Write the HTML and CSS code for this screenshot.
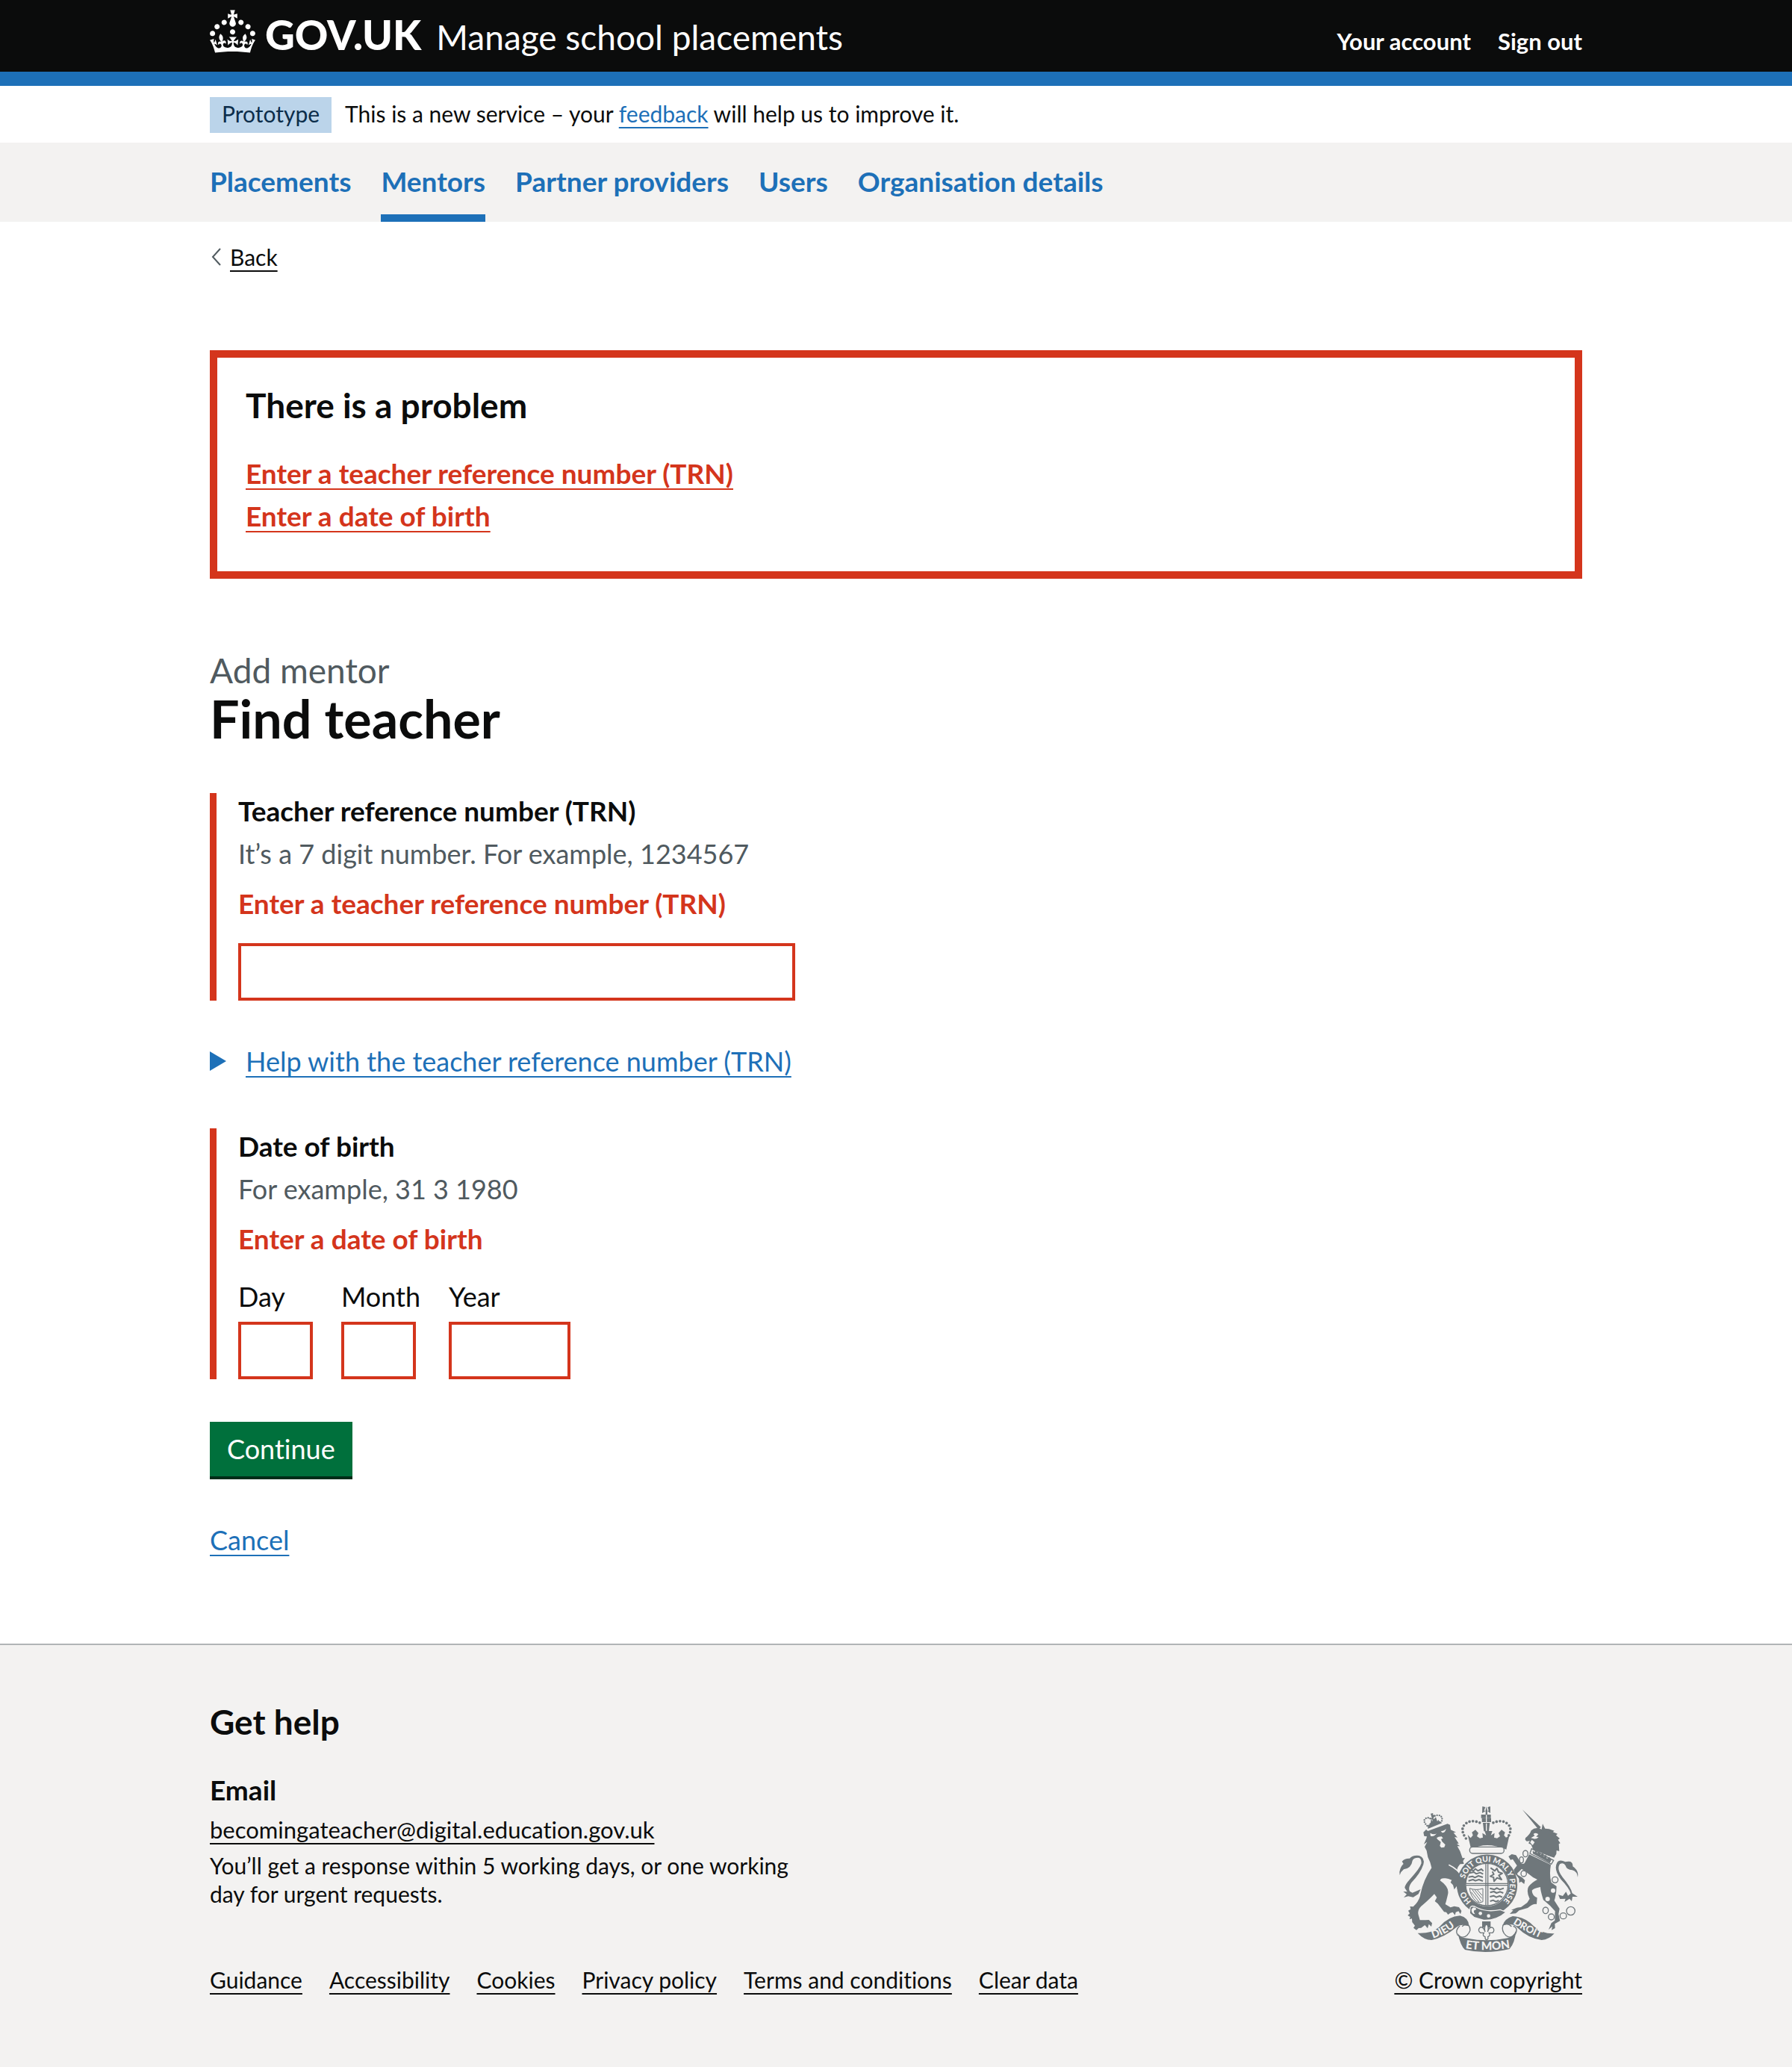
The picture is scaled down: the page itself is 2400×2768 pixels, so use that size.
FILE: index.html
```html
<!DOCTYPE html>
<html lang="en">
<head>
<meta charset="utf-8">
<meta name="viewport" content="width=device-width, initial-scale=1">
<title>Find teacher - Manage school placements - GOV.UK</title>
<link rel="stylesheet" href="styles.css">
</head>
<body>
<header class="header">
  <div class="container header-row">
    <a class="logo" href="#">
      <svg class="crown" viewBox="0 0 32 30" aria-hidden="true"><path fill="currentColor" d="M22.6 10.4c-1 .4-2-.1-2.4-1-.4-.9.1-2 1-2.4.9-.4 2 .1 2.4 1s-.1 2-1 2.4m-5.9 6.7c-.9.4-2-.1-2.4-1-.4-.9.1-2 1-2.4.9-.4 2 .1 2.4 1s-.1 2-1 2.4m10.8-3.7c-1 .4-2-.1-2.4-1-.4-.9.1-2 1-2.4.9-.4 2 .1 2.4 1s0 2-1 2.4m3.3 4.8c-1 .4-2-.1-2.4-1-.4-.9.1-2 1-2.4.9-.4 2 .1 2.4 1s-.1 2-1 2.4M17 4.7l2.3 1.2V2.5l-2.3.7-.2-.2.9-3h-3.4l.9 3-.2.2c-.1.1-2.3-.7-2.3-.7v3.4L15 4.7c.1.1.1.2.2.2l-1.3 4c-.1.2-.1.4-.1.6 0 1.1.8 2 1.9 2.2h.7c1-.2 1.9-1.1 1.9-2.1 0-.2 0-.4-.1-.6l-1.3-4c-.1-.2 0-.2.1-.3m-7.6 5.7c.9.4 2-.1 2.4-1 .4-.9-.1-2-1-2.4-.9-.4-2 .1-2.4 1s0 2 1 2.4m-5 3c.9.4 2-.1 2.4-1 .4-.9-.1-2-1-2.4-.9-.4-2 .1-2.4 1s.1 2 1 2.4m-3.2 4.8c.9.4 2-.1 2.4-1 .4-.9-.1-2-1-2.4-.9-.4-2 .1-2.4 1s0 2 1 2.4m14.8 11c4.4 0 8.6.3 12.3.8 1.1-4.5 2.4-7 3.7-8.8l-2.5-.9c.2 1.3.3 1.9 0 2.7-.4-.4-.8-1.1-1.1-2.3l-1.2 4c.7-.5 1.3-.8 2-.9-1.1 2.5-2.6 3.1-3.5 3-1.1-.2-1.7-1.2-1.5-2.1.3-1.2 1.5-1.5 2.1-.1 1.1-2.3-.8-3-2-2.3 1.9-1.9 2.1-3.5.6-5.6-2.1 1.6-2.1 3.2-1.2 5.5-1.2-1.4-3.2-.6-2.5 1.6.9-1.4 2.1-.5 1.9.8-.2 1.1-1.7 2.1-3.5 1.9-2.7-.2-2.9-2.1-2.9-3.6.7-.1 1.9.5 2.9 1.9l.4-4.3c-1.1 1.1-2.1 1.4-3.2 1.4.4-1.2 2.1-3 2.1-3h-5.4s1.7 1.9 2.1 3c-1.1 0-2.1-.2-3.2-1.4l.4 4.3c1-1.4 2.2-2 2.9-1.9-.1 1.5-.2 3.4-2.9 3.6-1.9.2-3.4-.8-3.5-1.9-.2-1.3 1-2.2 1.9-.8.7-2.3-1.2-3-2.5-1.6.9-2.2.9-3.9-1.2-5.5-1.5 2-1.3 3.7.6 5.6-1.2-.7-3.1 0-2 2.3.6-1.4 1.8-1.1 2.1.1.2.9-.3 1.9-1.5 2.1-.9.2-2.4-.5-3.5-3 .6 0 1.2.3 2 .9l-1.2-4c-.3 1.1-.7 1.9-1.1 2.3-.3-.8-.2-1.4 0-2.7l-2.9.9C1.3 23 2.6 25.5 3.7 30c3.7-.5 7.9-.8 12.3-.8"/></svg>
      <span class="logo-text">GOV.UK</span>
    </a>
    <a class="service-name" href="#">Manage school placements</a>
    <nav class="account" aria-label="Account">
      <a href="#">Your account</a>
      <a href="#">Sign out</a>
    </nav>
  </div>
</header>

<div class="container phase">
  <strong class="tag">Prototype</strong>
  <span>This is a new service – your <a class="link" href="#">feedback</a> will help us to improve it.</span>
</div>

<nav class="primary" aria-label="Primary">
  <ul class="container primary-list">
    <li><a href="#">Placements</a></li>
    <li><a href="#" aria-current="page">Mentors</a></li>
    <li><a href="#">Partner providers</a></li>
    <li><a href="#">Users</a></li>
    <li><a href="#">Organisation details</a></li>
  </ul>
</nav>

<div class="container content">
  <a class="back" href="#">
    <svg class="back-icon" viewBox="0 0 14 24" aria-hidden="true"><path d="M12 1L2 12l10 11" fill="none" stroke="#505a5f" stroke-width="2"/></svg>
    <span class="back-text">Back</span>
  </a>
  <main>
    <section class="error-summary" role="alert" aria-labelledby="problem">
      <h2 id="problem">There is a problem</h2>
      <ul>
        <li><a href="#trn">Enter a teacher reference number (TRN)</a></li>
        <li><a href="#day">Enter a date of birth</a></li>
      </ul>
    </section>

    <h1 class="title"><span class="caption">Add mentor</span>Find teacher</h1>

    <form action="#">
      <div class="group">
        <label class="group-label" for="trn">Teacher reference number (TRN)</label>
        <p class="hint" id="trn-hint">It’s a 7 digit number. For example, 1234567</p>
        <p class="error" id="trn-error">Enter a teacher reference number (TRN)</p>
        <input class="input input-wide" id="trn" type="text" aria-describedby="trn-hint trn-error">
      </div>

      <details class="details">
        <summary>
          <svg class="marker" viewBox="0 0 22 26" aria-hidden="true"><path fill="currentColor" d="M0 0l22 13L0 26z"/></svg>
          <span>Help with the teacher reference number (TRN)</span>
        </summary>
        <p>You can find the TRN on a payslip or teachers’ pension documentation.</p>
      </details>

      <div class="group">
        <fieldset aria-describedby="dob-hint dob-error">
          <legend class="group-label">Date of birth</legend>
          <p class="hint" id="dob-hint">For example, 31 3 1980</p>
          <p class="error" id="dob-error">Enter a date of birth</p>
          <div class="dates">
            <div class="date"><label for="day">Day</label><input class="input input-2" id="day" type="text" inputmode="numeric"></div>
            <div class="date"><label for="month">Month</label><input class="input input-2" id="month" type="text" inputmode="numeric"></div>
            <div class="date"><label for="year">Year</label><input class="input input-4" id="year" type="text" inputmode="numeric"></div>
          </div>
        </fieldset>
      </div>

      <button class="button" type="submit">Continue</button>
    </form>
    <p class="cancel"><a class="link" href="#">Cancel</a></p>
  </main>
</div>

<footer class="footer">
  <div class="container footer-row">
    <div>
      <h2 class="help-title">Get help</h2>
      <h3 class="email-title">Email</h3>
      <p class="email"><a class="plain" href="mailto:becomingateacher@digital.education.gov.uk">becomingateacher@digital.education.gov.uk</a></p>
      <p class="response">You’ll get a response within 5 working days, or one working day for urgent requests.</p>
      <ul class="footer-links">
        <li><a class="plain" href="#">Guidance</a></li>
        <li><a class="plain" href="#">Accessibility</a></li>
        <li><a class="plain" href="#">Cookies</a></li>
        <li><a class="plain" href="#">Privacy policy</a></li>
        <li><a class="plain" href="#">Terms and conditions</a></li>
        <li><a class="plain" href="#">Clear data</a></li>
      </ul>
    </div>
    <a class="copyright" href="#">
      <svg class="arms" viewBox="87 50 750 600" aria-hidden="true">
        <defs>
          <path id="garter" d="M392 441A92 92 0 1 1 514 444"/>
          <path id="ribbon-left" d="M238 589Q290 574 338 532"/>
          <path id="ribbon-mid" d="M368 629Q450 643 546 628"/>
          <path id="ribbon-right" d="M558 530Q608 562 676 592"/>
        </defs>
        <g fill="#6f777b">
          <!-- lion -->
          <path d="M199 163L210 152 217 158 296 129 306 133 309 153 330 163 320 165 336 184 324 182 341 208 333 209 346 219 335 219 346 238 356 267 366 266 358 279 362 290 347 291Q333 305 335 318L350 342 348 358 364 371 369 395 359 400 359 384 351 397 343 388 335 391 333 379 323 393 318 375 308 364 313 355 300 350 288 348Q268 345 266 357Q302 382 298 409Q292 437 287 452L308 465 323 460 342 464 352 479 348 492 340 480 329 484 326 496 317 484 307 487 298 494 291 484 282 483 257 450 245 440 253 425 243 411Q217 438 190 460Q174 476 179 495L185 516 208 516 221 515 234 528 231 542 221 532 216 549 205 536 190 547 180 548 171 556 159 547 165 538 154 524 153 510 143 512 146 503 136 497 144 489 138 478 148 472 145 461 158 462Q184 438 187 412Q200 352 232 306Q229 286 217 263L212 237 204 222 214 202 201 211 211 188 213 180 202 178Z"/>
          <path d="M103 322Q107 300 119 290L113 280Q124 267 144 268Q155 254 182 257Q206 266 199 292Q188 326 151 365Q136 386 144 400L155 406 188 392 179 411 158 424 138 420 120 425 132 412 118 401 134 402 124 386Q124 374 147 349Q185 308 191 287Q191 266 178 265Q159 265 155 277Q151 307 120 312Q108 321 104 335Z"/>
          <path d="M217 134L265 118 274 126 217 149Z"/>
          <path fill="none" stroke="#6f777b" stroke-width="7" stroke-linecap="round" stroke-dasharray="0 9" d="M214 137Q195 118 207 108Q222 100 230 112Q242 92 263 95Q280 101 271 124"/>
          <path d="M228 88l10-2-1 8 6-2 1 8-7 1 4 10 8-9 6 18 4-8 5 10-38 15-3-9 5-3 2-14 7 9z"/>
          <path fill="#f3f2f1" d="M226 166Q242 174 252 168Q242 182 228 178ZM269 157Q281 160 290 149Q287 166 274 165ZM252 186L260 181 272 180 278 187 270 190 274 200 287 213 283 223 271 225 265 218 269 202 256 192Z"/>
          <path fill="none" stroke="#f3f2f1" stroke-width="5" d="M301 294Q337 311 363 348"/>
          <!-- unicorn -->
          <path d="M596 71L671 142 662 153Z"/>
          <path d="M609 186Q628 171 632 156Q651 139 674 151L678 129 688 148 704 150 725 157 719 162 738 169 732 175 747 188 740 193 749 207 743 210 745 239 734 236 733 250 724 265 700 257 640 232 629 205 638 215 646 203 635 193 628 203 634 214 621 207 627 198 614 199 608 193Z"/>
          <path fill="#f3f2f1" d="M641 170Q651 162 661 171L652 181 662 182Q652 193 640 188L631 186 646 177Z"/>
          <path fill="none" stroke="#6f777b" stroke-width="4" d="M634 229L722 276 713 291 627 248Z"/>
          <path d="M638 237l8 6 4-11 7 15 6-8 8 15 9-10 3 17 9-8 3 16 11-6 7 11-6 12-68-37z"/>
          <path d="M624 252L711 294Q704 335 713 365L734 380Q734 411 725 437L746 470 742 492 748 519 727 531 728 548 714 556 717 541 702 554 713 528 727 517 728 480 708 458 681 435Q669 398 669 383Q641 388 635 397Q636 417 656 426L654 452Q640 449 618 467L584 477 570 489 546 491 560 477 552 475 574 466 591 464 616 446 626 430Q612 401 621 382Q635 364 657 353Q638 345 623 331L594 310 576 328 578 334 596 345 607 356 604 371 592 361 584 366 583 349 567 329 562 314 575 297 558 271 549 274 541 260 554 251 571 255 592 288Q603 293 607 284Z"/>
          <path d="M819 344Q818 321 797 315Q774 314 770 297Q762 282 747 291Q733 312 758 343Q793 385 797 408L819 422 798 422 795 440 786 430 766 443 770 430 748 431 741 414 759 419 772 402 780 418 791 409Q785 387 752 353Q720 312 737 283Q747 271 769 282Q801 274 799 300Q818 312 820 332Z"/>
          <g fill="none" stroke="#6f777b" stroke-width="4"><ellipse cx="609" cy="249" rx="10" ry="13"/><ellipse cx="593" cy="274" rx="8" ry="12"/><ellipse cx="602" cy="329" rx="11" ry="12" fill="#f3f2f1"/><circle cx="728" cy="354" r="12" fill="#f3f2f1"/><ellipse cx="690" cy="477" rx="11" ry="13"/><circle cx="713" cy="503" r="12"/><ellipse cx="761" cy="499" rx="13" ry="12"/><circle cx="791" cy="479" r="17"/></g>
          <g fill="#f3f2f1"><circle cx="720" cy="397" r="9"/><circle cx="698" cy="431" r="9"/></g>
          <!-- crown -->
          <path d="M436 59l12 3-5 13 5 4 4-20 5 20 4-4-4-13 11-3v27l-12-8v14h14v14h-39v-14h18v-14l-14 8z"/>
          <path d="M434 106h37v16h-37zM438 125h28l-4 34h-20zM377 173l12 13 9-11-4-12 14-10 12 13-6 13 12 8 12-3-2-18 15 9-6-17h31l-6 17 15-9-2 18 12 3 12-8-6-13 12-13 14 10-4 12 9 11 13-13-13 59Q450 198 391 232Z"/>
          <path fill="none" stroke="#f3f2f1" stroke-width="4" d="M452 93v29M452 127v30"/>
          <path fill="none" stroke="#6f777b" stroke-width="11" stroke-linecap="round" stroke-dasharray="0 14" d="M370 188Q344 150 367 130Q391 109 429 126M535 188Q561 150 538 130Q514 109 476 126"/>
          <rect x="385" y="222" width="138" height="26" rx="12" fill="#f3f2f1" stroke="#6f777b" stroke-width="4"/>
          <!-- garter and shield -->
          <circle cx="455" cy="374" r="104" fill="#f3f2f1" stroke="#6f777b" stroke-width="35"/>
          <circle cx="454" cy="373" r="85" fill="#f3f2f1" stroke="#6f777b" stroke-width="4"/>
          <path fill="none" stroke="#6f777b" stroke-width="4" d="M450 289v168M458 289v168M370 369h168M370 376h168"/>
          <g fill="none" stroke="#6f777b" stroke-width="6" stroke-linejoin="round">
            <path d="M390 313l10 5 8-8 10 8 14-7 8 8M384 327l18-4 9 7 16-5 12 6M380 343l16-3 10 5 14-7 18 6M380 358l18-5 10 5 14-5 16 6"/>
            <path d="M469 306l17 12 8-10 7 15 15 5-14 8 11 17-18-7-12 14-2-16-13-4 14-8-6-11"/>
            <path d="M466 388l18 5 10-6 12 6 16-5M467 405l15-4 11 6 14-5 13 5M466 422l15-4 11 6 13-5 11 5M467 440l12-4 11 6 12-5"/>
          </g>
          <path fill="none" stroke="#6f777b" stroke-width="3" d="M385 388Q410 398 438 389V442Q424 450 412 442Q387 418 385 388ZM395 393l36 48M405 394l29 35M415 394l20 23M391 403l32 41"/>
          <path stroke="#f3f2f1" stroke-width="4" d="M386 473Q386 455 405 461L417 467Q455 485 508 474L531 484Q493 518 441 516L403 505L385 489Z"/>
          <g fill="#f3f2f1"><circle cx="428" cy="489" r="7"/><circle cx="461" cy="499" r="7"/><path d="M392 474Q397 461 407 466Q417 472 404 476Q398 482 407 492Q392 492 392 474Z"/></g>
          <!-- ribbon and fleur-de-lis -->
          <path d="M176 568Q230 571 262 544Q300 500 346 498Q380 506 382 538L379 540Q350 529 332 544Q285 584 232 596Q202 596 176 568ZM725 570Q675 572 642 540Q608 503 558 500Q525 510 517 538Q548 525 571 541Q618 590 674 596Q704 594 725 570ZM337 567Q344 588 377 589Q452 604 529 589Q561 586 571 558Q567 608 545 632Q452 655 366 635Q348 620 337 567Z"/>
          <path fill="none" stroke="#6f777b" stroke-width="4" d="M345 539Q325 558 336 575Q355 593 374 577Q396 555 380 536Q360 532 355 542M560 540Q582 548 568 573Q550 593 531 578Q511 560 519 536Q538 525 553 542"/>
          <path d="M435 521h34v25h-34z"/>
          <path fill="#f3f2f1" stroke="#6f777b" stroke-width="4" d="M452 531Q441 544 447 563Q440 541 427 545Q415 557 428 567H442Q434 578 447 583Q446 594 453 596Q461 593 458 583Q470 578 463 567H477Q488 556 477 546Q464 541 457 563Q464 543 452 531Z"/>
        </g>
        <g class="motto">
          <text font-size="31"><textPath href="#garter">HO<tspan dx="50">SOIT QUI MAL Y PENSE</tspan></textPath></text>
          <text font-size="42"><textPath href="#ribbon-left">DIEU</textPath></text>
          <text font-size="46"><textPath href="#ribbon-mid">ET MON</textPath></text>
          <text font-size="40"><textPath href="#ribbon-right">DROIT</textPath></text>
        </g>
      </svg>
      <span class="plain">© Crown copyright</span>
    </a>
  </div>
</footer>
</body>
</html>
```
FILE: styles.css
```css
:root {
  --text: #0b0c0c;
  --secondary: #505a5f;
  --link: #1d70b8;
  --error: #d4351c;
  --surface: #f3f2f1;
}

* {
  box-sizing: border-box;
}

body {
  margin: 0;
  min-height: 100vh;
  display: flex;
  flex-direction: column;
  background: #fff;
  color: var(--text);
  font-family: Lato, "Liberation Sans", sans-serif;
  font-size: 36px;
  line-height: 48px;
  font-variant-ligatures: none;
}

h1, h2, h3, p, ul, fieldset {
  margin: 0;
  padding: 0;
  border: 0;
}

fieldset {
  min-width: 0;
}

ul {
  list-style: none;
}

input, button {
  font: inherit;
}

.container {
  width: calc(100% - 60px);
  max-width: 1838px;
  margin-inline: auto;
}

.link, .plain, .error-summary a, .back-text, .details span {
  text-decoration: underline 2px;
  text-underline-offset: 6px;
}

.link {
  color: var(--link);
}

.plain {
  color: var(--text);
}

/* Header */
.header {
  background: var(--text);
  border-bottom: 19px solid var(--link);
}

.header-row {
  display: flex;
  align-items: baseline;
  min-height: 96px;
  padding-top: 17px;
  line-height: 58px;
}

.header a {
  color: #fff;
  text-decoration: none;
}

.logo {
  display: flex;
  align-items: baseline;
  gap: 13px;
}

.crown {
  align-self: flex-start;
  width: 61px;
  height: 58px;
  margin-top: -4px;
}

.logo-text {
  font-size: 55px;
  font-weight: 900;
}

.service-name {
  margin-left: 20px;
  font-size: 46px;
}

.account {
  display: flex;
  gap: 36px;
  margin-left: auto;
  font-size: 31px;
  font-weight: 700;
}

/* Phase banner */
.phase {
  display: flex;
  align-items: baseline;
  gap: 18px;
  padding: 15px 0 13px;
  font-size: 30px;
  line-height: 38px;
}

.tag {
  padding: 3px 16px 7px;
  background: #bbd4ea;
  color: #0c2d4a;
  font-weight: 400;
}

/* Primary navigation */
.primary {
  background: var(--surface);
}

.primary-list {
  display: flex;
  gap: 40px;
}

.primary a {
  display: block;
  padding: 28px 0 20px;
  border-bottom: 10px solid transparent;
  color: var(--link);
  font-size: 37px;
  font-weight: 700;
  text-decoration: none;
}

.primary a[aria-current] {
  border-color: var(--link);
}

/* Content */
.content {
  padding: 28px 0 115px;
}

.back {
  display: flex;
  align-items: center;
  gap: 11px;
  width: fit-content;
  margin-bottom: 106px;
  padding-left: 2px;
  color: var(--text);
  font-size: 30px;
  line-height: 38px;
  text-decoration: none;
}

.back-icon {
  width: 14px;
  height: 24px;
}

.error-summary {
  margin-bottom: 94px;
  padding: 35px 38px 50px;
  border: 10px solid var(--error);
}

.error-summary h2 {
  margin-bottom: 38px;
  font-size: 46px;
  line-height: 58px;
}

.error-summary li + li {
  margin-top: 9px;
}

.error-summary a {
  color: var(--error);
  font-size: 37px;
  font-weight: 700;
}

.title {
  margin-bottom: 65px;
  font-size: 70px;
  line-height: 70px;
}

.caption {
  display: block;
  color: var(--secondary);
  font-size: 46px;
  font-weight: 400;
  line-height: 58px;
}

.group {
  padding-left: 29px;
  border-left: 9px solid var(--error);
}

.group-label {
  display: block;
  margin-bottom: 9px;
  padding: 0;
  font-size: 37px;
  font-weight: 700;
}

.hint {
  margin-bottom: 19px;
  color: var(--secondary);
}

.error {
  margin-bottom: 29px;
  color: var(--error);
  font-size: 37px;
  font-weight: 700;
}

.input {
  display: block;
  height: 77px;
  padding: 8px;
  border: 4px solid var(--error);
  border-radius: 0;
  background: #fff;
}

.input-wide {
  width: 100%;
  max-width: 746px;
}

.input-2 {
  width: 100px;
}

.input-4 {
  width: 163px;
}

.details {
  margin: 57px 0 66px;
}

.details summary {
  display: flex;
  align-items: center;
  gap: 26px;
  color: var(--link);
  list-style: none;
  cursor: pointer;
}

.marker {
  width: 22px;
  height: 26px;
}

.dates {
  display: flex;
  gap: 38px;
}

.date label {
  display: block;
  margin-bottom: 10px;
}

.button {
  display: block;
  margin: 57px 0;
  padding: 12px 23px 13px;
  border: 0;
  background: #00703c;
  border-bottom: 4px solid #002d18;
  color: #fff;
}

/* Footer */
.footer {
  flex: 1;
  padding: 74px 0 97px;
  border-top: 2px solid #b1b4b6;
  background: var(--surface);
  font-size: 30px;
  line-height: 38px;
}

.footer-row {
  display: flex;
  justify-content: space-between;
  align-items: flex-end;
}

.help-title {
  margin-bottom: 38px;
  font-size: 46px;
  line-height: 58px;
}

.email-title {
  margin-bottom: 10px;
  font-size: 37px;
  line-height: 48px;
}

.email {
  margin-bottom: 10px;
  font-size: 31px;
}

.response {
  max-width: 800px;
  margin-bottom: 77px;
}

.footer-links {
  display: flex;
  flex-wrap: wrap;
  gap: 10px 36px;
}

.copyright {
  display: flex;
  flex-direction: column;
  align-items: flex-end;
  gap: 16px;
  text-decoration: none;
}

.arms {
  width: 250px;
  height: 200px;
}

.motto {
  fill: var(--surface);
  font-weight: 900;
}
```
